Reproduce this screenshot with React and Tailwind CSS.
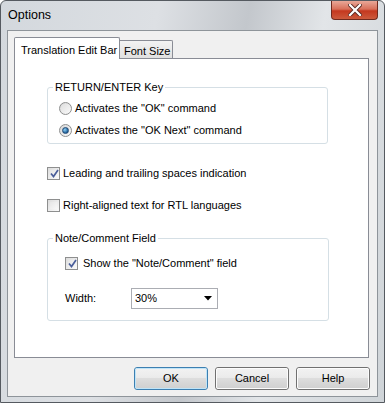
import React from 'react';

const font = { fontFamily: '"Liberation Sans", Arial, sans-serif' };

// Casilla estilo Windows 7
function CheckBox({ checked }) {
  return (
    <span className="w-[13px] h-[13px] shrink-0 border border-[#8e8f8f] bg-[linear-gradient(135deg,#dcdcdc,#fbfbfb)] p-[2px] flex">
      <span className="flex-1 bg-[linear-gradient(135deg,#e6e6e6,#f8f8f8)] flex items-center justify-center">
        {checked && (
          <svg width="9" height="9" viewBox="0 0 9 9">
            <path d="M1 4.5 L3.5 7.5 L8 1" fill="none" stroke="#4a5e9a" strokeWidth="1.7" />
          </svg>
        )}
      </span>
    </span>
  );
}

function Radio({ checked }) {
  return (
    <span className="w-[13px] h-[13px] shrink-0 rounded-full border border-[#8e8f8f] bg-[linear-gradient(135deg,#d6d6d6,#fbfbfb)] flex items-center justify-center">
      {checked ? (
        <span className="w-[7px] h-[7px] rounded-full bg-[radial-gradient(circle_at_35%_35%,#8fd2f7,#1f5f98_70%)] border border-[#224a75]" />
      ) : (
        <span className="w-[9px] h-[9px] rounded-full bg-[linear-gradient(135deg,#e0e0e0,#f7f7f7)]" />
      )}
    </span>
  );
}

function Group({ label, className, children }) {
  return (
    <fieldset className={`border border-[#d5dfe5] rounded-[3px] px-[5px] ${className}`}>
      <legend className="px-[2px] leading-[14px]">{label}</legend>
      {children}
    </fieldset>
  );
}

function WinButton({ label, primary }) {
  return (
    <button
      type="button"
      className={`w-[74px] h-[23px] rounded-[3px] border ${
        primary ? 'border-[#3c7fb1]' : 'border-[#707070]'
      } bg-[linear-gradient(#f2f2f2_0%,#ebebeb_45%,#dddddd_50%,#cfcfcf_100%)] text-[11px] text-black flex items-center justify-center`}
    >
      <span
        className={`w-full h-full rounded-[2px] border ${
          primary ? 'border-[#bfe4f8]' : 'border-[#fcfcfc]'
        } flex items-center justify-center`}
      >
        {label}
      </span>
    </button>
  );
}

export default function App() {
  return (
    <div className="w-[385px] h-[403px] text-[11px] text-black" style={font}>
      <div className="w-full h-full border border-[#555a60] rounded-t-[6px] flex flex-col bg-[linear-gradient(100deg,#d3d8dd_0%,#dde0e4_35%,#c3c7cc_55%,#e2e5e8_72%,#cfd4d8_100%)]">
        {/* Barra de título */}
        <div className="h-[29px] flex items-start justify-between pl-[7px] pr-[6px]">
          <span className="self-center text-[12.5px] text-black mt-[-1px]">Options</span>
          <span className="w-[47px] h-[19px] rounded-b-[4px] border border-[#6f2a1e] border-t-0 bg-[linear-gradient(#e9a898_0%,#d8705a_45%,#c4381f_55%,#cc5a3c_100%)] flex items-center justify-center">
            <svg width="14" height="12" viewBox="0 0 14 12">
              <path d="M2 1 L12 11 M12 1 L2 11" stroke="#5a2b24" strokeWidth="4" strokeLinecap="square" />
              <path d="M2 1 L12 11 M12 1 L2 11" stroke="#ffffff" strokeWidth="2.2" strokeLinecap="square" />
            </svg>
          </span>
        </div>

        {/* Área cliente */}
        <div className="ml-[6px] w-[371px] h-[367px] border border-[#8e949a] bg-[#f0f0f0] pl-[6px] pt-[6px] flex flex-col">
          {/* Pestañas */}
          <div className="h-[21px] flex items-end relative z-10 text-[11px] whitespace-nowrap">
            <div className="w-[106px] h-[22px] mb-[-1px] border border-[#898c95] border-b-0 bg-white rounded-t-[2px] pl-[6px] pt-[4px]">
              Translation Edit Bar
            </div>
            <div className="w-[53px] h-[18px] border border-[#898c95] border-b-0 border-l-0 bg-[linear-gradient(#f3f3f3,#e0e0e0)] rounded-tr-[2px] pl-[4px] pt-[2px]">
              Font Size
            </div>
          </div>

          {/* Panel */}
          <div className="w-[355px] h-[300px] border border-[#898c95] bg-white flex flex-col pl-[32px]">
            <Group label="RETURN/ENTER Key" className="mt-[21px] w-[281px] pb-[2px]">
              <div className="pl-[6px] pt-[3px]">
                <div className="h-[22px] flex items-center gap-[3px]">
                  <Radio />
                  <span>Activates the "OK" command</span>
                </div>
                <div className="h-[22px] flex items-center gap-[3px]">
                  <Radio checked />
                  <span>Activates the "OK Next" command</span>
                </div>
              </div>
            </Group>

            <div className="mt-[21px] h-[16px] flex items-center gap-[3px]">
              <CheckBox checked />
              <span>Leading and trailing spaces indication</span>
            </div>
            <div className="mt-[16px] h-[16px] flex items-center gap-[3px]">
              <CheckBox />
              <span>Right-aligned text for RTL languages</span>
            </div>

            <Group label="Note/Comment Field" className="mt-[18px] w-[282px] pb-[11px]">
              <div className="pl-[12px] pt-[10px]">
                <div className="h-[16px] flex items-center gap-[5px]">
                  <CheckBox checked />
                  <span>Show the "Note/Comment" field</span>
                </div>
                <div className="mt-[17px] h-[21px] flex items-center">
                  <span className="w-[66px]">Width:</span>
                  <div className="w-[87px] h-[21px] border border-[#abadb3] bg-white flex items-center justify-between pl-[3px] pr-[5px]">
                    <span>30%</span>
                    <svg width="8" height="5" viewBox="0 0 8 5">
                      <path d="M0 0 L8 0 L4 4.5 Z" fill="#000" />
                    </svg>
                  </div>
                </div>
              </div>
            </Group>
          </div>

          {/* Botones */}
          <div className="mt-[9px] flex justify-end gap-[7px] pr-[7px]">
            <WinButton label="OK" primary />
            <WinButton label="Cancel" />
            <WinButton label="Help" />
          </div>
        </div>
      </div>
    </div>
  );
}
